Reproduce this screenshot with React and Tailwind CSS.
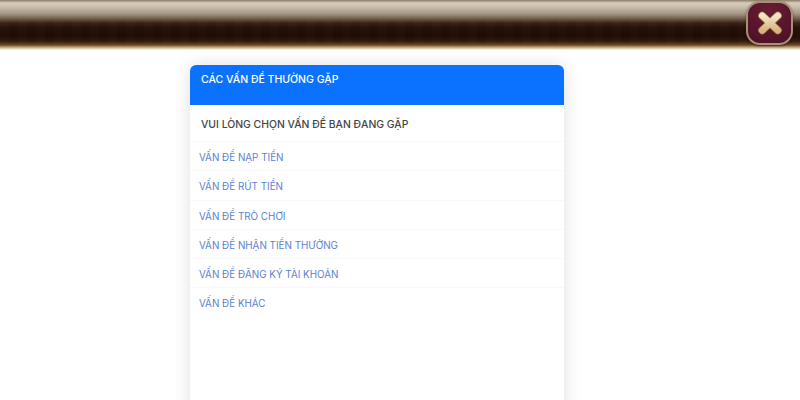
const items = ["VẤN ĐỀ NẠP TIỀN", "VẤN ĐỀ RÚT TIỀN", "VẤN ĐỀ TRÒ CHƠI", "VẤN ĐỀ NHẬN TIỀN THƯỞNG", "VẤN ĐỀ ĐĂNG KÝ TÀI KHOẢN", "VẤN ĐỀ KHÁC"];

function CloseButton() {
  return (
    <div className="absolute left-[746px] top-[1px] w-[47px] h-[44px] rounded-[14px] border-2 border-[#a98f78] bg-[radial-gradient(circle_at_50%_20%,#6a1c34,#4a1026)] flex items-center justify-center shadow-[0_1px_2px_rgba(40,10,10,0.6)]">
      <svg width="26" height="24" viewBox="0 0 28 26">
        <defs>
          <linearGradient id="x" x1="0" y1="0" x2="0" y2="1">
            <stop offset="0" stopColor="#f3e6c8" />
            <stop offset="1" stopColor="#d8b47c" />
          </linearGradient>
        </defs>
        <path d="M5.5 5L22.5 21M22.5 5L5.5 21" stroke="#9a7a4c" strokeWidth="8.5" strokeLinecap="round" />
        <path d="M5.5 5L22.5 21M22.5 5L5.5 21" stroke="url(#x)" strokeWidth="7" strokeLinecap="round" />
      </svg>
    </div>
  );
}

export default function App() {
  return (
    <div className="relative w-[800px] h-[400px] overflow-hidden bg-white font-['Inter','Liberation_Sans',sans-serif]">
      <header className="relative h-[50px] bg-[linear-gradient(180deg,#8a7a68_0px,#d8cdbc_3px,#c4b8a8_8px,#a39482_14px,#6e5a48_19px,#3a2216_23px,#241008_28px,#1f0c05_36px,#2e180c_41px,#6b4a2c_45px,#b89a70_47px,#e8dcc4_49px,#ffffff_50px)]">
        <div className="absolute inset-x-0 top-[20px] h-[24px] bg-[repeating-linear-gradient(90deg,rgba(120,80,50,0.04)_0px,rgba(120,80,50,0.04)_9px,rgba(0,0,0,0.03)_9px,rgba(0,0,0,0.03)_18px)]" />
      </header>
      <CloseButton />
      <main className="flex pl-[190px]">
        <section className="mt-[15px] w-[374px] h-[400px] rounded-t-[6px] bg-white shadow-[0_0_18px_rgba(0,0,0,0.13)]">
          <div className="h-[40px] rounded-t-[6px] bg-[#0a72ff] pl-[11px] pr-3 pt-[8px] text-[10.5px] leading-[14px] font-medium text-white">
            CÁC VẤN ĐỀ THƯỜNG GẶP
          </div>
          <div className="h-[37px] pl-[11px] pr-3 pt-[13px] text-[10.4px] leading-[14px] font-medium text-[#444444] border-b border-[#f8f8f8]">
            VUI LÒNG CHỌN VẤN ĐỀ BẠN ĐANG GẶP
          </div>
          <ul>
            {items.map((t) => (
              <li key={t} className="h-[29.3px] pl-[9px] pr-[10px] pt-[8px] text-[9.85px] leading-[14px] text-[#5b7fcf] border-b border-[#f8f8f8] last:border-b-0">
                {t}
              </li>
            ))}
          </ul>
        </section>
      </main>
    </div>
  );
}
